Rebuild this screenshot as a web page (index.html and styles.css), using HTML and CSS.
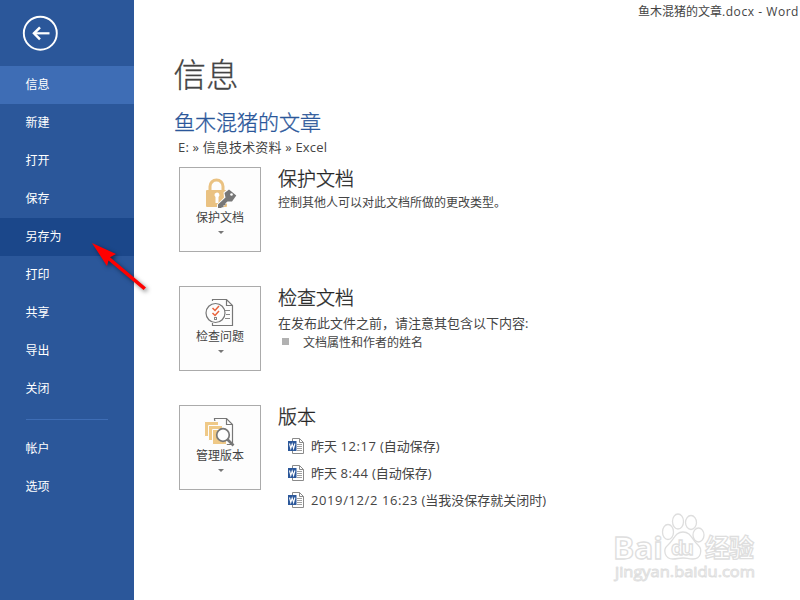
FILE: index.html
```html
<!DOCTYPE html>
<html lang="zh-CN">
<head>
<meta charset="utf-8">
<title>鱼木混猪的文章.docx - Word</title>
<link rel="stylesheet" href="styles.css">
</head>
<body>
<svg class="defs" width="0" height="0">
  <symbol id="word" viewBox="0 0 17 17">
    <path d="M4.500 .5h7l4 4v11h-11z" fill="#fff" stroke="#8a8a8a"/>
    <path d="M11.500 .5v4h4" fill="none" stroke="#8a8a8a"/>
    <path d="M9 6.500h5M9 8.500h5M9 10.500h5M9 12.500h5" stroke="#a0a0a0"/>
    <path d="M0 3h8.500v10H0z" fill="#2b579a"/>
    <path d="M1.500 5.500l1.300 5L4.200 6l1.400 4.500 1.300-5" fill="none" stroke="#fff" stroke-width="1.100"/>
  </symbol>
</svg>
<div class="app">
  <nav class="sidebar">
    <button class="back" aria-label="返回">
      <svg width="36" height="36" viewBox="0 0 36 36" fill="none" stroke="#fff">
        <circle cx="18.300" cy="18.200" r="16.500" stroke-width="1.900"/>
        <path d="M27.500 18.300H12" stroke-width="2.200"/>
        <path d="M18 12.300l-6 6 6 6" stroke-width="2.500"/>
      </svg>
    </button>
    <a class="item active">信息</a>
    <a class="item">新建</a>
    <a class="item">打开</a>
    <a class="item">保存</a>
    <a class="item hover">另存为</a>
    <a class="item">打印</a>
    <a class="item">共享</a>
    <a class="item">导出</a>
    <a class="item">关闭</a>
    <hr class="rule">
    <a class="item">帐户</a>
    <a class="item">选项</a>
  </nav>
  <main class="main">
    <div class="titlebar">鱼木混猪的文章<span class="ext">.docx - Word</span></div>
    <h1 class="page-title">信息</h1>
    <h2 class="doc-title">鱼木混猪的文章</h2>
    <div class="path">E: » 信息技术资料 » Excel</div>

    <section class="card">
      <button class="tile">
        <svg width="34" height="34" viewBox="0 0 34 34">
          <path d="M7 15V9.500a6.500 6.500 0 0 1 13 0V15" fill="none" stroke="#eac282" stroke-width="3"/>
          <rect x="3" y="13" width="21" height="17" rx="1" fill="#eac282"/>
          <path d="M11.500 18.500a2.500 2.500 0 1 1 4 1.500v6h-3v-6z" fill="#fff"/>
          <path d="M20.500 15.500l5-4.500 8.500 7.500-5 7.500h-5L18 32h-4v-4.500l7-7z" fill="#fdfdfd"/>
          <path d="M21.500 16l4.500-3.500 7.300 6-4.300 6h-4.500l-2 1.800v2h-2v2h-2V31H15v-3.500l7.500-7z" fill="#777"/>
          <circle cx="28.500" cy="17.500" r="1.300" fill="#fff"/>
        </svg>
        <span class="label">保护文档</span><i class="caret"></i>
      </button>
      <div class="body">
        <h3>保护文档</h3>
        <p class="small">控制其他人可以对此文档所做的更改类型。</p>
      </div>
    </section>

    <section class="card">
      <button class="tile">
        <svg width="34" height="34" viewBox="0 0 34 34" fill="none">
          <path d="M9.500 5V3.500h14l6 6v20h-20V27M23.500 3.500v6h6" stroke="#777" stroke-width="1.200"/>
          <path d="M22 14.500h5M23 18.500h4M22 22.500h5" stroke="#888"/>
          <circle cx="12.500" cy="17" r="9.500" fill="#fdfdfd" stroke="#777" stroke-width="1.200"/>
          <path d="M9.500 12l2.500 2.500 4-4.500M9.500 17l2.500 2.500 4-4.500" stroke="#e8633c" stroke-width="1.500"/>
          <rect x="11.500" y="21.500" width="2" height="2" stroke="#888"/>
        </svg>
        <span class="label">检查问题</span><i class="caret"></i>
      </button>
      <div class="body">
        <h3>检查文档</h3>
        <p class="lead">在发布此文件之前，请注意其包含以下内容:</p>
        <p class="bullet">文档属性和作者的姓名</p>
      </div>
    </section>

    <section class="card">
      <button class="tile">
        <svg width="34" height="34" viewBox="0 0 34 34">
          <path d="M11.500 4.500V3.500h12l6 6v20h-16V12z" fill="#fdfdfd" stroke="#777" stroke-width="1.200"/>
          <path d="M23.500 3.500v6h6" fill="none" stroke="#777" stroke-width="1.200"/>
          <path d="M1.500 6.500h14v15h-14z" fill="#efc987" stroke="#fdfdfd"/>
          <path d="M5.500 10.500h14v15h-14z" fill="#efc987" stroke="#fdfdfd"/>
          <path d="M9.500 14.500h14v15h-14z" fill="#efc987" stroke="#fdfdfd"/>
          <path d="M24 24l6.500 6.500" stroke="#777" stroke-width="2.600"/>
          <circle cx="20" cy="20" r="6.300" fill="#fdfdfd" stroke="#777" stroke-width="1.700"/>
        </svg>
        <span class="label">管理版本</span><i class="caret"></i>
      </button>
      <div class="body">
        <h3>版本</h3>
        <ul class="versions">
          <li><svg width="17" height="17"><use href="#word"/></svg><span>昨天 <span class="num">12:17</span> (自动保存)</span></li>
          <li><svg width="17" height="17"><use href="#word"/></svg><span>昨天 <span class="num">8:44</span> (自动保存)</span></li>
          <li><svg width="17" height="17"><use href="#word"/></svg><span><span class="num">2019/12/2 16:23</span> (当我没保存就关闭时)</span></li>
        </ul>
      </div>
    </section>
  </main>

  <svg class="pointer" width="70" height="64" viewBox="0 0 70 64">
    <path d="M5 5l24 11-6 3.200L59 49.500l-2.500 2.500L21.500 22.500l-1.500 5.500z" fill="#f00"/>
  </svg>

  <svg class="watermark" width="156" height="78" viewBox="0 0 156 78">
    <g fill="#fff" stroke="#dedede" stroke-width="1.300">
      <ellipse cx="58" cy="24" rx="5.500" ry="7.500"/>
      <ellipse cx="68" cy="13.500" rx="5.500" ry="7.500"/>
      <ellipse cx="81" cy="14.500" rx="5.500" ry="7"/>
      <ellipse cx="88.500" cy="27" rx="5.500" ry="7"/>
      <path d="M73 24c8 0 9 8 15 13 5 5 3 14-5 14-5 0-6-1-10-1s-6 1-10 1c-8 0-11-9-5-14 6-5 7-13 15-13z"/>
      <g class="wm-text">
        <text x="3" y="51" font-size="31" textLength="50" lengthAdjust="spacingAndGlyphs">Bai</text>
        <text x="61" y="47" font-size="20" textLength="23">du</text>
        <text x="95" y="49" font-size="25" textLength="49">经验</text>
      </g>
      <text class="wm-url" x="5" y="69" font-size="15" textLength="140" lengthAdjust="spacingAndGlyphs">jingyan.baidu.com</text>
    </g>
  </svg>
</div>
</body>
</html>
```
FILE: styles.css
```css
* { box-sizing: border-box; margin: 0; padding: 0; }
body {
  width: 800px;
  height: 600px;
  overflow: hidden;
  background: #fff;
  color: #444;
  font-family: "Open Sans", "Noto Sans CJK SC", sans-serif;
  font-size: 12px;
}
.defs { display: none; }
button { font: inherit; color: inherit; border: 0; background: none; }
.app { position: relative; display: flex; width: 800px; height: 600px; }

.sidebar { width: 134px; background: #2b579a; color: #fff; }
.back { display: block; width: 36px; height: 36px; margin: 15px 0 15px 22px; }
.back svg { display: block; }
.item { display: block; height: 38px; padding-left: 25.5px; line-height: 37px; }
.item.active { background: #3e6db5; }
.item.hover { background: #1b478a; }
.rule { width: 82px; margin: 11px 0 10px 26px; border: 0; border-top: 1px solid #3e6db5; }

.main { flex: 1; }
.titlebar { height: 24px; line-height: 24px; padding-right: 1px; text-align: right; white-space: nowrap; }
.ext { letter-spacing: 0.55px; }
.page-title, .doc-title, .body h3 { font-weight: 300; -webkit-text-stroke: 0.3px currentColor; }
.page-title { height: 66px; margin: 18px 0 0 39.5px; line-height: 65px; font-size: 32.5px; }
.doc-title { height: 28px; margin-left: 40px; line-height: 28px; font-size: 21px; color: #2b579a; }
.path { height: 31px; padding-left: 44px; line-height: 22px; font-size: 13px; letter-spacing: 0.17px; }

.card { display: flex; gap: 17px; height: 119px; padding-left: 45px; }
.tile {
  display: flex;
  flex-direction: column;
  align-items: center;
  width: 82px;
  height: 85px;
  padding-top: 9px;
  border: 1px solid #ababab;
  background: #fdfdfd;
}
.tile svg { display: block; }
.label { height: 14px; line-height: 14px; }
.caret { margin: 6px 0 0 2px; border: 3px solid transparent; border-top-color: #777; border-bottom: 0; }
.body { flex: 1; white-space: nowrap; }
.body h3 { height: 26px; line-height: 24px; font-size: 19px; color: #262626; }
.small { line-height: 19px; }
.lead { height: 20px; line-height: 22px; font-size: 13px; }
.bullet { display: flex; align-items: center; gap: 14px; height: 19px; padding-left: 4px; }
.bullet::before { content: ""; width: 7px; height: 7px; background: #b1b1b1; }
.versions { list-style: none; padding: 2px 0 0 10px; font-size: 13px; }
.versions li { display: flex; align-items: center; gap: 6px; height: 27px; line-height: 27px; }
.num { letter-spacing: 0.6px; }

.pointer { position: absolute; left: 87px; top: 238px; filter: drop-shadow(2px 2px 2px rgba(0, 0, 0, 0.5)); }
.watermark { position: absolute; left: 610px; top: 508px; }
.wm-text { font-family: "Open Sans", "Noto Sans CJK SC", sans-serif; font-weight: 700; }
.wm-url { font-family: "Open Sans", sans-serif; stroke-width: 0.9; }
```
